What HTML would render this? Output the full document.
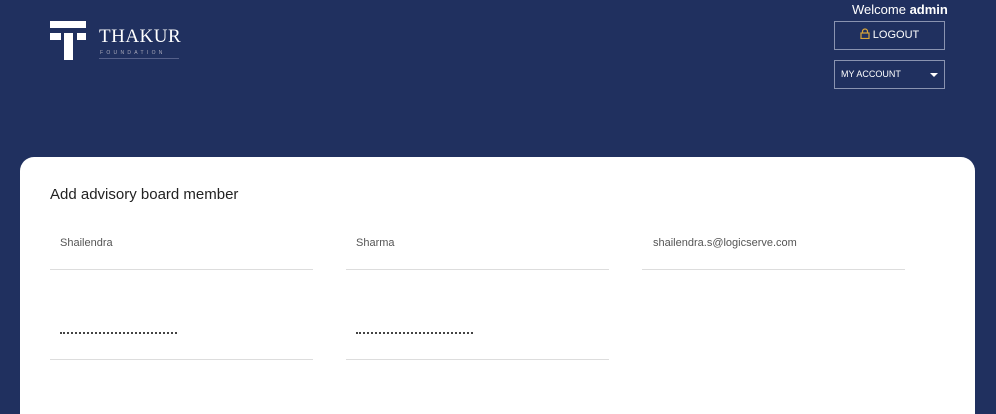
<!DOCTYPE html>
<html style="overflow:hidden;height:414px"><head><style>
body{margin:0;width:996px;height:414px;background:#20305f;font-family:"Liberation Sans",sans-serif;position:relative;overflow:hidden}
.a{position:absolute}
.card{left:20px;top:157px;width:955px;height:257px;background:#fff;border-radius:14px 14px 0 0}
.line{height:1px;background:#ddd;width:263px}
.t{font-size:11px;color:#555}
.btn{border:1px solid #8a93b0;color:#fff;box-sizing:border-box}
.dots{height:0;border-top:2px dotted #444}
</style></head><body>
<div class="a" style="left:50px;top:21px;width:36px;height:7px;background:#fff"></div>
<div class="a" style="left:50px;top:33px;width:11px;height:7px;background:#fff"></div>
<div class="a" style="left:77px;top:33px;width:9px;height:7px;background:#fff"></div>
<div class="a" style="left:64px;top:33px;width:9px;height:27px;background:#fff"></div>
<div class="a" style="left:99px;top:26px;color:#fff;font-family:'Liberation Serif',serif;font-size:19px;letter-spacing:0.5px">THAKUR</div>
<div class="a" style="left:100px;top:50px;color:#aab;font-size:5px;letter-spacing:3.3px">FOUNDATION</div>
<div class="a" style="left:99px;top:58px;width:80px;height:1px;background:#55608a"></div>
<div class="a" style="left:852px;top:2px;color:#fff;font-size:13px">Welcome <b>admin</b></div>
<div class="a btn" style="left:834px;top:21px;width:111px;height:29px;font-size:11px;line-height:27px;text-align:center">
<svg width="10" height="11" viewBox="0 0 10 11" style="vertical-align:-1px"><path d="M2.5 5V3.5a2.5 2.5 0 0 1 5 0V5" fill="none" stroke="#d9a53a" stroke-width="1.2"/><rect x="1" y="5" width="8" height="5.5" fill="none" stroke="#d9a53a" stroke-width="1.2"/></svg> LOGOUT</div>
<div class="a btn" style="left:834px;top:60px;width:111px;height:29px;font-size:9px;line-height:27px;padding-left:6px">MY ACCOUNT<span class="a" style="right:6px;top:12px;width:0;height:0;border-left:4px solid transparent;border-right:4px solid transparent;border-top:4px solid #fff"></span></div>
<div class="a card"></div>
<div class="a" style="left:50px;top:186px;font-size:15px;color:#222">Add advisory board member</div>
<div class="a t" style="left:60px;top:237px">Shailendra</div>
<div class="a t" style="left:356px;top:237px">Sharma</div>
<div class="a t" style="left:653px;top:237px">shailendra.s@logicserve.com</div>
<div class="a line" style="left:50px;top:269px"></div>
<div class="a line" style="left:346px;top:269px"></div>
<div class="a line" style="left:642px;top:269px"></div>
<div class="a dots" style="left:60px;top:332px;width:117px"></div>
<div class="a dots" style="left:356px;top:332px;width:117px"></div>
<div class="a line" style="left:50px;top:359px"></div>
<div class="a line" style="left:346px;top:359px"></div>
</body></html>
